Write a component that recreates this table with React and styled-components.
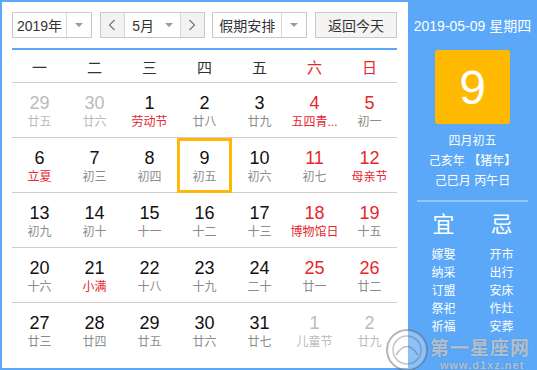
import React from "react";
import styled, { createGlobalStyle } from "styled-components";

const Global = createGlobalStyle`
  html, body { margin: 0; padding: 0; overflow: hidden; }
  body { font-family: "Liberation Sans", Arial, "Noto Sans CJK SC", sans-serif; }
`;

const BLUE = "#5aa8f7";
const RED = "#e8262d";
const FONT = `"Liberation Sans", Arial, "Noto Sans CJK SC", sans-serif`;

const Frame = styled.div`
  position: relative;
  width: 537px;
  height: 370px;
  display: flex;
  background: ${BLUE};
  overflow: hidden;
  font-family: ${FONT};
`;

const Main = styled.div`
  box-sizing: border-box;
  width: 406px;
  height: 366px;
  margin: 2px 0 2px 2px;
  background: #fff;
  padding: 10px 11px 0 10px;
`;

const Toolbar = styled.div`
  display: flex;
  justify-content: space-between;
  height: 26px;
`;

const Box = styled.div`
  box-sizing: border-box;
  display: flex;
  align-items: stretch;
  width: ${(p) => p.$w}px;
  height: 26px;
  border: 1px solid #c9c9c9;
  background: #fff;
  font-size: 14px;
  color: #333;
`;

const BoxText = styled.div`
  flex: 1;
  display: flex;
  align-items: center;
  justify-content: center;
  padding-left: ${(p) => p.$pl || 0}px;
`;

const ArrowCell = styled.div`
  width: ${(p) => p.$w || 24}px;
  display: flex;
  align-items: center;
  justify-content: center;
  border-left: ${(p) => (p.$divider ? "1px solid #d6d6d6" : "none")};
`;

const Caret = styled.span`
  width: 0;
  height: 0;
  border-left: 4px solid transparent;
  border-right: 4px solid transparent;
  border-top: 4px solid #999;
`;

const NavBtn = styled.div`
  width: 23px;
  display: flex;
  align-items: center;
  justify-content: center;
  background: #f2f2f2;
  border-${(p) => (p.$side === "left" ? "right" : "left")}: 1px solid #d6d6d6;
`;

const TodayBtn = styled.div`
  box-sizing: border-box;
  width: 82px;
  height: 26px;
  display: flex;
  align-items: center;
  justify-content: center;
  border: 1px solid #c9c9c9;
  background: #f4f4f4;
  font-size: 14px;
  color: #333;
`;

const BlueLine = styled.div`
  margin-top: 10px;
  height: 2px;
  background: #5aa8f7;
`;

const WeekHead = styled.div`
  display: grid;
  grid-template-columns: repeat(7, 55px);
  height: 32px;
  border-bottom: 1px solid #cfcfcf;
`;

const WeekName = styled.div`
  display: flex;
  align-items: center;
  justify-content: center;
  font-size: 15px;
  color: ${(p) => (p.$red ? RED : "#333")};
`;

const Row = styled.div`
  display: grid;
  grid-template-columns: repeat(7, 55px);
  height: 54px;
  border-bottom: ${(p) => (p.$last ? "none" : "1px solid #cfcfcf")};
`;

const Cell = styled.div`
  display: flex;
  flex-direction: column;
  align-items: center;
  padding-top: 10px;
  box-shadow: ${(p) => (p.$sel ? "inset 0 0 0 3px #ffb80a" : "none")};
  height: ${(p) => (p.$sel ? "55px" : "auto")};
  box-sizing: border-box;
`;

const Num = styled.div`
  font-size: 18px;
  line-height: 20px;
  color: ${(p) => (p.$out ? "#bbb" : p.$red ? RED : "#111")};
`;

const Lunar = styled.div`
  margin-top: 1px;
  font-size: 12px;
  line-height: 16px;
  white-space: nowrap;
  color: ${(p) => (p.$out ? "#bbb" : p.$red ? RED : "#8c8c8c")};
`;

const Side = styled.div`
  width: 129px;
  display: flex;
  flex-direction: column;
  align-items: center;
  color: #fff;
`;

const SideDate = styled.div`
  margin-top: 17px;
  font-size: 14px;
  line-height: 18px;
`;

const BigDay = styled.div`
  margin-top: 15px;
  width: 75px;
  height: 74px;
  border-radius: 3px;
  background: #ffb900;
  display: flex;
  align-items: center;
  justify-content: center;
  font-size: 48px;
  color: #fff;
`;

const LunarInfo = styled.div`
  margin-top: 7px;
  font-size: 12px;
  line-height: 20px;
  text-align: center;
`;

const Divider = styled.div`
  margin-top: 9px;
  width: 111px;
  height: 2px;
  background: #94c9fb;
`;

const YiJi = styled.div`
  display: grid;
  grid-template-columns: 58px 58px;
  margin-top: 10px;
`;

const YiJiHead = styled.div`
  text-align: center;
  font-size: 22px;
  line-height: 26px;
`;

const YiJiList = styled.div`
  margin-top: 8px;
  display: flex;
  flex-direction: column;
  align-items: center;
  font-size: 12px;
  line-height: 18px;
`;

const Watermark = styled.div`
  position: absolute;
  right: 0;
  bottom: 0;
  width: 152px;
  height: 45px;
  pointer-events: none;
`;

const WmLogo = styled.svg`
  position: absolute;
  left: 0;
  top: 3px;
`;

const WmTitle = styled.div`
  position: absolute;
  left: 45px;
  top: 13px;
  font-size: 19px;
  font-weight: bold;
  letter-spacing: 1px;
  color: rgba(255, 255, 255, 0.55);
  text-shadow: 0 0 1px rgba(80, 80, 80, 0.6);
  font-family: "Noto Sans CJK SC", sans-serif;
  line-height: 18px;
`;

const WmUrl = styled.div`
  position: absolute;
  left: 55px;
  top: 35px;
  font-size: 11px;
  font-weight: bold;
  letter-spacing: 1px;
  color: rgba(255, 255, 255, 0.55);
  text-shadow: 0 0 1px rgba(80, 80, 80, 0.6);
  line-height: 10px;
`;

const Chevron = ({ dir }) => (
  <svg width="8" height="12" viewBox="0 0 8 12">
    <polyline
      points={dir === "left" ? "6.5,1 1.5,6 6.5,11" : "1.5,1 6.5,6 1.5,11"}
      fill="none"
      stroke="#777"
      strokeWidth="1.2"
    />
  </svg>
);

const weeks = ["一", "二", "三", "四", "五", "六", "日"];

const rows = [
  [
    { n: 29, l: "廿五", out: 1 },
    { n: 30, l: "廿六", out: 1 },
    { n: 1, l: "劳动节", lr: 1 },
    { n: 2, l: "廿八" },
    { n: 3, l: "廿九" },
    { n: 4, l: "五四青...", lr: 1 },
    { n: 5, l: "初一" },
  ],
  [
    { n: 6, l: "立夏", lr: 1 },
    { n: 7, l: "初三" },
    { n: 8, l: "初四" },
    { n: 9, l: "初五", sel: 1 },
    { n: 10, l: "初六" },
    { n: 11, l: "初七" },
    { n: 12, l: "母亲节", lr: 1 },
  ],
  [
    { n: 13, l: "初九" },
    { n: 14, l: "初十" },
    { n: 15, l: "十一" },
    { n: 16, l: "十二" },
    { n: 17, l: "十三" },
    { n: 18, l: "博物馆日", lr: 1 },
    { n: 19, l: "十五" },
  ],
  [
    { n: 20, l: "十六" },
    { n: 21, l: "小满", lr: 1 },
    { n: 22, l: "十八" },
    { n: 23, l: "十九" },
    { n: 24, l: "二十" },
    { n: 25, l: "廿一" },
    { n: 26, l: "廿二" },
  ],
  [
    { n: 27, l: "廿三" },
    { n: 28, l: "廿四" },
    { n: 29, l: "廿五" },
    { n: 30, l: "廿六" },
    { n: 31, l: "廿七" },
    { n: 1, l: "儿童节", out: 1 },
    { n: 2, l: "廿九", out: 1 },
  ],
];

const yi = ["嫁娶", "纳采", "订盟", "祭祀", "祈福"];
const ji = ["开市", "出行", "安床", "作灶", "安葬"];

export default function App() {
  return (
    <>
      <Global />
      <Frame>
        <Main>
          <Toolbar>
            <Box $w={80}>
              <BoxText>2019年</BoxText>
              <ArrowCell $divider>
                <Caret />
              </ArrowCell>
            </Box>
            <Box $w={105}>
              <NavBtn $side="left">
                <Chevron dir="left" />
              </NavBtn>
              <BoxText $pl={4}>5月</BoxText>
              <ArrowCell $w={22}>
                <Caret />
              </ArrowCell>
              <NavBtn $side="right">
                <Chevron dir="right" />
              </NavBtn>
            </Box>
            <Box $w={95}>
              <BoxText>假期安排</BoxText>
              <ArrowCell $divider>
                <Caret />
              </ArrowCell>
            </Box>
            <TodayBtn>返回今天</TodayBtn>
          </Toolbar>
          <BlueLine />
          <WeekHead>
            {weeks.map((w, i) => (
              <WeekName key={w} $red={i >= 5}>
                {w}
              </WeekName>
            ))}
          </WeekHead>
          {rows.map((r, ri) => (
            <Row key={ri} $last={ri === rows.length - 1}>
              {r.map((c, ci) => (
                <Cell key={ci} $sel={c.sel}>
                  <Num $out={c.out} $red={ci >= 5}>
                    {c.n}
                  </Num>
                  <Lunar $out={c.out} $red={c.lr}>
                    {c.l}
                  </Lunar>
                </Cell>
              ))}
            </Row>
          ))}
        </Main>
        <Side>
          <SideDate>2019-05-09 星期四</SideDate>
          <BigDay>9</BigDay>
          <LunarInfo>
            四月初五
            <br />
            己亥年 【猪年】
            <br />
            己巳月 丙午日
          </LunarInfo>
          <Divider />
          <YiJi>
            <YiJiHead>宜</YiJiHead>
            <YiJiHead>忌</YiJiHead>
            <YiJiList>
              {yi.map((t) => (
                <div key={t}>{t}</div>
              ))}
            </YiJiList>
            <YiJiList>
              {ji.map((t) => (
                <div key={t}>{t}</div>
              ))}
            </YiJiList>
          </YiJi>
        </Side>
        <Watermark>
          <WmLogo width="44" height="44" viewBox="0 0 44 44">
            <circle cx="22" cy="22" r="20" fill="rgba(255,255,255,0.3)" stroke="rgba(90,90,90,0.45)" strokeWidth="2" />
            <circle cx="22" cy="22" r="14" fill="none" stroke="rgba(90,90,90,0.35)" strokeWidth="1.5" />
            <path d="M11 27 Q22 10 33 27" fill="none" stroke="rgba(90,90,90,0.4)" strokeWidth="1.5" />
          </WmLogo>
          <WmTitle>第一星座网</WmTitle>
          <WmUrl>www.d1xz.net</WmUrl>
        </Watermark>
      </Frame>
    </>
  );
}
